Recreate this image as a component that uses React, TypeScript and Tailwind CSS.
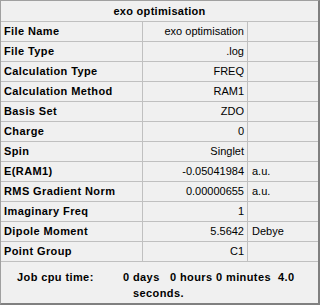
const rows: { label: string; value: string; unit?: string }[] = [
  { label: "File Name", value: "exo optimisation" },
  { label: "File Type", value: ".log" },
  { label: "Calculation Type", value: "FREQ" },
  { label: "Calculation Method", value: "RAM1" },
  { label: "Basis Set", value: "ZDO" },
  { label: "Charge", value: "0" },
  { label: "Spin", value: "Singlet" },
  { label: "E(RAM1)", value: "-0.05041984", unit: "a.u." },
  { label: "RMS Gradient Norm", value: "0.00000655", unit: "a.u." },
  { label: "Imaginary Freq", value: "1" },
  { label: "Dipole Moment", value: "5.5642", unit: "Debye" },
  { label: "Point Group", value: "C1" },
];

export default function App() {
  return (
    <div className="w-[320px] h-[305px] bg-[#f0f0f0] text-black font-['Liberation_Sans',Arial,sans-serif] text-[11px] border-l border-t border-[#a0a0a0] border-r-2 border-b-2 border-r-[#808080] border-b-[#808080] flex flex-col overflow-hidden">
      {/* title */}
      <div className="h-[21px] shrink-0 flex items-center justify-center font-bold tracking-[0.3px] border-b border-[#c0c0c0]">
        exo optimisation
      </div>

      {/* summary rows */}
      {rows.map((row) => (
        <div key={row.label} className="h-[20px] shrink-0 flex border-b border-[#c0c0c0]">
          <div className="w-[142px] shrink-0 border-r border-[#c0c0c0] pl-[3px] flex items-center font-bold tracking-[0.4px]">
            {row.label}
          </div>
          <div className="w-[105px] shrink-0 border-r border-[#c0c0c0] pr-[3px] flex items-center justify-end">
            {row.value}
          </div>
          <div className="flex-1 pl-[4px] flex items-center">{row.unit}</div>
        </div>
      ))}

      {/* timing footer */}
      <div className="flex-1 flex flex-col font-bold leading-[16px] tracking-[0.4px] pt-[7px]">
        <div className="flex pl-[16px] whitespace-nowrap">
          <span className="w-[106px]">Job cpu time:</span>
          <span className="w-[47px]">0 days</span>
          <span className="w-[46px]">0 hours</span>
          <span className="w-[62px]">0 minutes</span>
          <span>4.0</span>
        </div>
        <div className="pl-[132px]">seconds.</div>
      </div>
    </div>
  );
}
